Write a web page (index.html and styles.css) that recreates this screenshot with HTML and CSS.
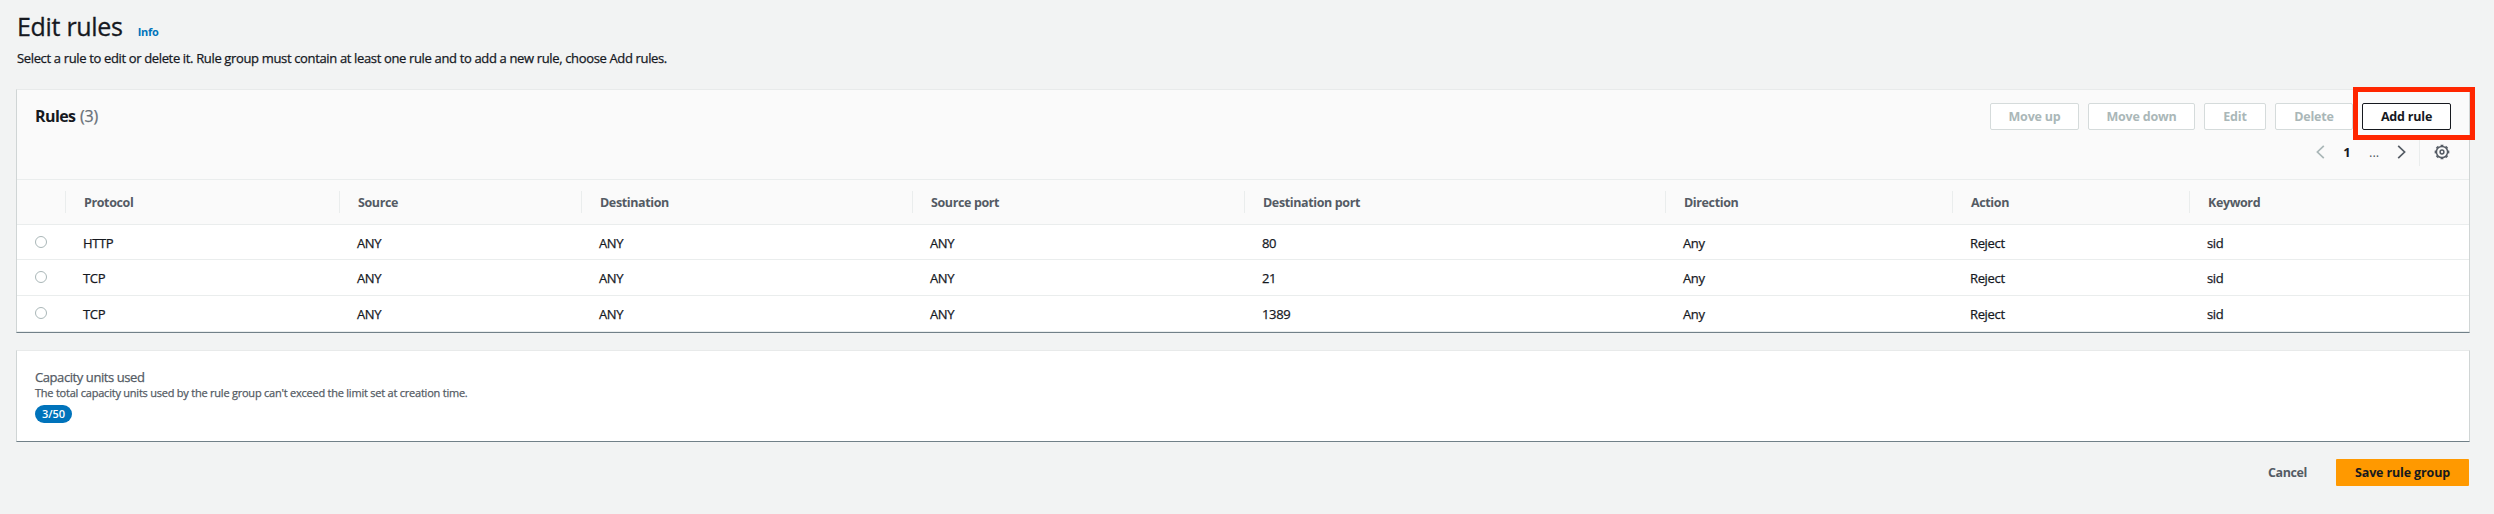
FILE: index.html
```html
<!DOCTYPE html>
<html lang="en">
<head>
<meta charset="utf-8">
<title>Edit rules</title>
<link rel="stylesheet" href="styles.css">
</head>
<body>
<main class="page">
  <header class="page-header">
    <div class="title-row">
      <h1 class="title">Edit rules</h1>
      <a class="info">Info</a>
    </div>
    <p class="description">Select a rule to edit or delete it. Rule group must contain at least one rule and to add a new rule, choose Add rules.</p>
  </header>

  <section class="panel rules">
    <div class="toolbar">
      <h2 class="rules-title">Rules <span class="count">(3)</span></h2>
      <div class="actions">
        <button class="btn btn-up" disabled>Move up</button>
        <button class="btn btn-down" disabled>Move down</button>
        <button class="btn btn-edit" disabled>Edit</button>
        <button class="btn btn-delete" disabled>Delete</button>
        <div class="highlighted"><button class="btn btn-add">Add rule</button><span class="highlight"></span></div>
      </div>
    </div>
    <div class="pager">
      <svg class="chevron prev" viewBox="0 0 9 14"><path d="M7.800 .8 1.400 7l6.400 6.200"/></svg>
      <span class="page-number">1</span>
      <span class="dots">...</span>
      <svg class="chevron next" viewBox="0 0 9 14"><path d="M1.200 .8 7.600 7l-6.400 6.200"/></svg>
      <span class="settings">
        <svg class="gear" viewBox="0 0 16 16"><circle cx="8" cy="8" r="5.600"/><circle class="teeth" cx="8" cy="8" r="6.700" pathLength="80"/><circle cx="8" cy="8" r="1.900"/></svg>
      </span>
    </div>
    <table class="table">
      <colgroup><col class="c0"><col class="c1"><col class="c2"><col class="c3"><col class="c4"><col class="c5"><col class="c6"><col class="c7"><col class="c8"></colgroup>
      <thead>
        <tr><th></th><th>Protocol</th><th>Source</th><th>Destination</th><th>Source port</th><th>Destination port</th><th>Direction</th><th>Action</th><th>Keyword</th></tr>
      </thead>
      <tbody>
        <tr class="first"><td><span class="radio"></span></td><td>HTTP</td><td>ANY</td><td>ANY</td><td>ANY</td><td>80</td><td>Any</td><td>Reject</td><td>sid</td></tr>
        <tr><td><span class="radio"></span></td><td>TCP</td><td>ANY</td><td>ANY</td><td>ANY</td><td>21</td><td>Any</td><td>Reject</td><td>sid</td></tr>
        <tr><td><span class="radio"></span></td><td>TCP</td><td>ANY</td><td>ANY</td><td>ANY</td><td>1389</td><td>Any</td><td>Reject</td><td>sid</td></tr>
      </tbody>
    </table>
  </section>

  <section class="panel capacity">
    <div class="capacity-label">Capacity units used</div>
    <div class="capacity-hint">The total capacity units used by the rule group can't exceed the limit set at creation time.</div>
    <span class="badge">3/50</span>
  </section>

  <footer class="footer">
    <button class="cancel">Cancel</button>
    <button class="save">Save rule group</button>
  </footer>
</main>
</body>
</html>
```
FILE: styles.css
```css
* { box-sizing: border-box; }

body {
  margin: 0;
  background: #f2f3f3;
  color: #16191f;
  font: 13px/20px "Open Sans", "Noto Sans", sans-serif;
}

.page { height: 514px; padding: 0 24px 0 16px; overflow: hidden; }

.page-header { height: 89px; padding: 10px 0 0 1px; }
.title-row { display: flex; align-items: baseline; height: 36px; }
.title { margin: 0; font-size: 25px; line-height: 32px; font-weight: 400; letter-spacing: -.3px; -webkit-text-stroke: .3px; }
.info { margin-left: 15px; color: #0073bb; font-size: 11px; font-weight: 700; letter-spacing: -.25px; }
.description { margin: 2px 0 0; letter-spacing: -.352px; }
.description, td, .capacity-label, .capacity-hint, .count { -webkit-text-stroke: .25px; }

.panel {
  background: #fff;
  border: 1px solid #d0d5d5;
  border-top-color: #e8eaea;
  border-bottom-color: #718088;
}

.rules { height: 244px; }
.toolbar {
  display: flex;
  justify-content: space-between;
  height: 50px;
  padding: 13px 18px 0 18px;
  background: #fafafa;
}
.rules-title { margin: 1px 0 0; font-size: 16px; line-height: 24px; font-weight: 700; letter-spacing: -.6px; }
.count { margin-left: 1px; color: #687078; font-weight: 400; letter-spacing: -.2px; }

.actions { display: flex; gap: 9px; }
.btn {
  height: 27px;
  padding: 0;
  border: 1px solid #16191f;
  border-radius: 2px;
  background: #fff;
  color: #16191f;
  font: inherit;
  font-size: 12.5px;
  font-weight: 700;
  letter-spacing: -.2px;
}
.btn:disabled { border-color: #d5dbdb; color: #aab7b8; }
.btn-up { width: 89px; }
.btn-down { width: 107px; }
.btn-edit { width: 62px; }
.btn-delete { width: 78px; }
.btn-add { display: block; width: 89px; }
.highlighted { position: relative; height: 27px; }
.highlight {
  position: absolute;
  top: -16px;
  left: -9px;
  width: 122px;
  height: 53px;
  border: 5px solid #ff2600;
}

.pager {
  display: flex;
  align-items: center;
  justify-content: flex-end;
  height: 39px;
  padding: 0 19px 15px 0;
  background: #fafafa;
}
.chevron { width: 9px; height: 14px; fill: none; stroke: #545b64; stroke-width: 1.7; }
.prev { stroke: #aab7b8; }
.page-number { width: 8px; margin-left: 18px; font-weight: 700; text-align: center; }
.dots { width: 10px; margin: 0 18px; color: #545b64; text-align: center; }
.settings { display: flex; align-items: center; height: 27px; margin-left: 13px; padding-left: 14px; border-left: 1px solid #eaeded; }
.gear { width: 16px; height: 16px; fill: none; stroke: #545b64; stroke-width: 1.5; }
.teeth { stroke-width: 1.3; stroke-dasharray: 5.5 4.5; stroke-dashoffset: 2.75; }

.table { width: 100%; table-layout: fixed; border-collapse: separate; border-spacing: 0; }
.c0 { width: 48px; }
.c1 { width: 274px; }
.c2 { width: 242px; }
.c3 { width: 331px; }
.c4 { width: 332px; }
.c5 { width: 421px; }
.c6 { width: 287px; }
.c7 { width: 237px; }
th {
  height: 46px;
  padding: 2px 0 0 19px;
  border-top: 1px solid #eaeded;
  border-bottom: 1px solid #eaeded;
  background: linear-gradient(#eaeded, #eaeded) 0 11px / 1px 22px no-repeat #fafafa;
  color: #545b64;
  font-size: 12.5px;
  font-weight: 700;
  letter-spacing: -.38px;
  text-align: left;
}
th:first-child { background: #fafafa; }
td { height: 36px; padding: 1px 0 0 18px; border-bottom: 1px solid #eaeded; letter-spacing: -.35px; }
.first td { height: 35px; padding-top: 2px; }
.radio { display: block; width: 12px; height: 12px; margin: -2px 0 0; border: 1px solid #aab7b8; border-radius: 50%; }

.capacity { height: 92px; margin-top: 17px; padding: 16px 18px; color: #545b64; }
.capacity-label { line-height: 20px; letter-spacing: -.42px; }
.capacity-hint { font-size: 11px; line-height: 12px; letter-spacing: -.227px; }
.badge {
  display: block;
  width: 37px;
  height: 18px;
  margin-top: 6px;
  border-radius: 9px;
  background: #0073bb;
  color: #fff;
  font-size: 11px;
  font-weight: 600;
  line-height: 18px;
  text-align: center;
}

.footer { display: flex; justify-content: flex-end; margin-top: 17px; }
.cancel, .save {
  height: 27px;
  padding: 0;
  border: 0;
  background: none;
  color: #545b64;
  font: inherit;
  font-size: 12.5px;
  font-weight: 700;
  letter-spacing: -.14px;
}
.cancel { margin-right: 29px; letter-spacing: -.4px; }
.save { width: 133px; margin-right: 1px; border-radius: 1px; background: #ff9900; color: #16191f; }
```
